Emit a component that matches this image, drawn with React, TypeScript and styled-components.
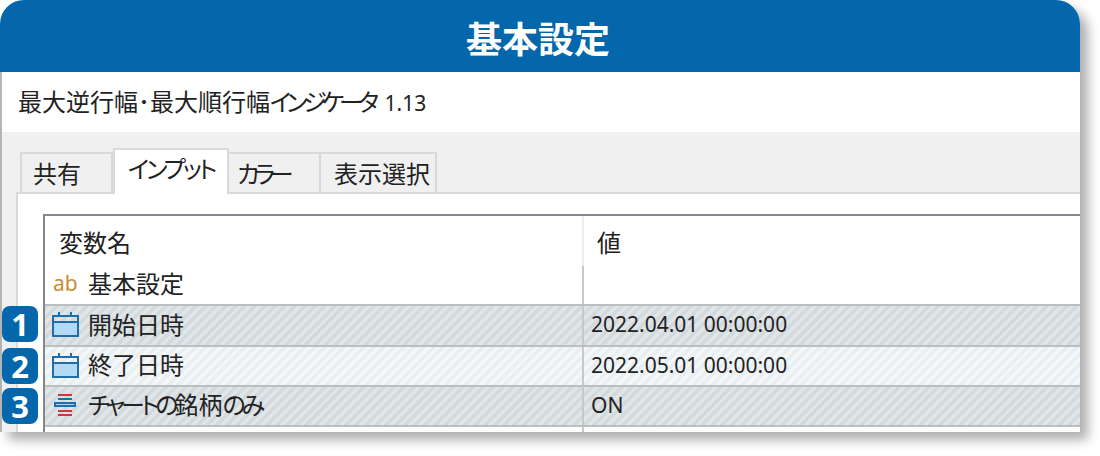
import { FC } from "react";
import styled, { createGlobalStyle } from "styled-components";

const GlobalStyle = createGlobalStyle`
    html, body {
        margin: 0;
        padding: 0;
        background: #fff;
    }
    body {
        width: 1100px;
        height: 456px;
        overflow: hidden;
        font-family: "Noto Sans CJK JP", "Noto Sans", sans-serif;
        font-feature-settings: "palt";
    }
`;

const tabs = [
    { label: "共有", width: 93, pad: 11, spacing: 0 },
    { label: "インプット", width: 116, pad: 13, spacing: -3, active: true },
    { label: "カラー", width: 92, pad: 8, spacing: -5 },
    { label: "表示選択", width: 116, pad: 13, spacing: 0 },
];

const CalendarIcon: FC = () => (
    <svg width="27" height="25" viewBox="0 0 27 25">
        <rect x="2" y="11" width="23" height="12" fill="#b3d9f5" />
        <rect x="1" y="4" width="25" height="20" fill="none" stroke="#1f6ea8" strokeWidth="2" />
        <rect x="0" y="9" width="27" height="2" fill="#1f6ea8" />
        <rect x="6" y="0" width="2" height="5" fill="#1f6ea8" />
        <rect x="18" y="0" width="2" height="5" fill="#1f6ea8" />
    </svg>
);

const SymbolIcon: FC = () => (
    <SymbolSvg width="22" height="22" viewBox="0 0 22 22">
        <rect x="4" y="0" width="14" height="2" fill="#c8393c" />
        <rect x="4" y="4" width="14" height="2" fill="#1f6ea8" />
        <rect x="1" y="9" width="20" height="3" fill="#a9d4f0" stroke="#1f6ea8" strokeWidth="2" />
        <rect x="4" y="16" width="14" height="2" fill="#c8393c" />
        <rect x="4" y="20" width="14" height="2" fill="#c8393c" />
    </SymbolSvg>
);

export default function App() {
    return (
        <>
            <GlobalStyle />
            <Card>
                <Header>基本設定</Header>
                <TitleRow>
                    最大逆行幅･最大順行幅<TitleKana>インジケータ</TitleKana> <Version>1.13</Version>
                </TitleRow>
                <Body>
                    <TabBar>
                        {tabs.map((tab) => (
                            <Tab
                                key={tab.label}
                                $width={tab.width}
                                $pad={tab.pad}
                                $spacing={tab.spacing}
                                $active={tab.active}
                            >
                                {tab.label}
                            </Tab>
                        ))}
                    </TabBar>
                    <Panel>
                        <Table>
                            <HeadRow>
                                <NameCell>
                                    <HeadLabel>変数名</HeadLabel>
                                </NameCell>
                                <ValueCell $fade>
                                    <HeadValue>値</HeadValue>
                                </ValueCell>
                            </HeadRow>
                            <GroupRow>
                                <NameCell>
                                    <Ab>ab</Ab>
                                    <Label>基本設定</Label>
                                </NameCell>
                                <ValueCell />
                            </GroupRow>
                            <Row $shade="dark" $height={41}>
                                <Badge $top={0}>1</Badge>
                                <NameCell>
                                    <IconSlot>
                                        <CalendarIcon />
                                    </IconSlot>
                                    <Label>開始日時</Label>
                                </NameCell>
                                <ValueCell>
                                    <Value>2022.04.01 00:00:00</Value>
                                </ValueCell>
                            </Row>
                            <Row $shade="light" $height={40}>
                                <Badge $top={1}>2</Badge>
                                <NameCell>
                                    <IconSlot>
                                        <CalendarIcon />
                                    </IconSlot>
                                    <Label>終了日時</Label>
                                </NameCell>
                                <ValueCell>
                                    <Value>2022.05.01 00:00:00</Value>
                                </ValueCell>
                            </Row>
                            <Row $shade="dark" $height={42} $closed>
                                <Badge $top={1}>3</Badge>
                                <NameCell>
                                    <IconSlot>
                                        <SymbolIcon />
                                    </IconSlot>
                                    <Label>
                                        <Kana>チャートの</Kana>銘柄<Kana>のみ</Kana>
                                    </Label>
                                </NameCell>
                                <ValueCell>
                                    <Value>ON</Value>
                                </ValueCell>
                            </Row>
                            <TailRow>
                                <NameCell />
                                <ValueCell />
                            </TailRow>
                        </Table>
                    </Panel>
                </Body>
            </Card>
        </>
    );
}

const Card = styled.div`
    width: 1080px;
    height: 432px;
    border-radius: 24px 24px 0 0;
    box-shadow: 8px 8px 12px rgba(0, 0, 0, 0.32);
    background: #fff;
    overflow: hidden;
    display: flex;
    flex-direction: column;
`;

const Header = styled.div`
    height: 72px;
    flex: none;
    box-sizing: border-box;
    padding-right: 4px;
    background: #0467ab;
    color: #fff;
    font-size: 36px;
    font-weight: 700;
    line-height: 74px;
    text-align: center;
`;

const TitleRow = styled.div`
    height: 60px;
    flex: none;
    box-sizing: border-box;
    border-left: 2px solid #b4b4b4;
    padding-left: 16px;
    font-size: 24px;
    line-height: 58px;
    color: #222;
    white-space: nowrap;
`;

const Kana = styled.span`
    letter-spacing: -4px;
`;

const TitleKana = styled(Kana)`
    letter-spacing: -4.8px;
`;

const Version = styled.span`
    font-family: "Noto Sans", sans-serif;
    font-size: 21px;
    margin-left: 5px;
`;

const Body = styled.div`
    flex: 1;
    min-height: 0;
    display: flex;
    flex-direction: column;
    box-sizing: border-box;
    border-left: 2px solid #b4b4b4;
    background: #f0f0f0;
    padding: 16px 0 0 14px;
`;

const TabBar = styled.div`
    display: flex;
    align-items: flex-end;
    height: 46px;
    flex: none;
    padding-left: 4px;
    position: relative;
    z-index: 1;
    margin-bottom: -2px;
`;

const Tab = styled.div<{ $width: number; $pad: number; $spacing: number; $active?: boolean }>`
    width: ${(p) => p.$width}px;
    height: ${(p) => (p.$active ? 46 : 42)}px;
    box-sizing: border-box;
    border: 2px solid #d9d9d9;
    border-left-width: ${(p) => (p.$active ? 2 : 0)}px;
    border-bottom: ${(p) => (p.$active ? "none" : "2px solid #d9d9d9")};
    background: ${(p) => (p.$active ? "#fff" : "#f0f0f0")};
    padding-left: ${(p) => p.$pad}px;
    font-size: 24px;
    line-height: ${(p) => (p.$active ? 36 : 38)}px;
    letter-spacing: ${(p) => p.$spacing}px;
    color: #222;
    white-space: nowrap;
    &:first-child {
        border-left-width: 2px;
    }
`;

const Panel = styled.div`
    flex: 1;
    min-height: 0;
    background: #fff;
    border-left: 2px solid #d9d9d9;
    border-top: 2px solid #d9d9d9;
    padding: 20px 0 0 25px;
`;

const Table = styled.div`
    height: 100%;
    box-sizing: border-box;
    border-left: 2px solid #85858c;
    border-top: 2px solid #85858c;
    display: flex;
    flex-direction: column;
`;

const BaseRow = styled.div`
    display: grid;
    grid-template-columns: 537px 1fr;
    flex: none;
`;

const HeadRow = styled(BaseRow)`
    height: 50px;
`;

const GroupRow = styled(BaseRow)`
    height: 38px;
`;

const TailRow = styled(BaseRow)`
    flex: 1;
`;

const Row = styled(BaseRow)<{ $shade: "dark" | "light"; $height: number; $closed?: boolean }>`
    position: relative;
    height: ${(p) => p.$height}px;
    box-sizing: border-box;
    border-top: 2px solid #babfc1;
    border-bottom: ${(p) => (p.$closed ? "2px solid #babfc1" : "none")};
    background: repeating-linear-gradient(
        135deg,
        ${(p) => (p.$shade === "dark" ? "#d3dadd" : "#e8eef1")} 0 3.5px,
        ${(p) => (p.$shade === "dark" ? "#e0e5e7" : "#f4f7f8")} 3.5px 7px
    );
`;

const NameCell = styled.div`
    display: flex;
    align-items: center;
    padding-left: 7px;
    min-width: 0;
`;

const ValueCell = styled.div<{ $fade?: boolean }>`
    display: flex;
    align-items: center;
    border-left: 2px solid ${(p) => (p.$fade ? "#ececec" : "#c8c8c8")};
`;

const HeadLabel = styled.span`
    font-size: 24px;
    color: #222;
    padding-left: 7px;
`;

const HeadValue = styled.span`
    font-size: 24px;
    color: #222;
    padding-left: 13px;
`;

const Ab = styled.span`
    width: 36px;
    flex: none;
    font-family: "Noto Sans", sans-serif;
    font-size: 21px;
    color: #c98c33;
    padding-left: 1px;
    box-sizing: border-box;
    margin-bottom: 4px;
`;

const IconSlot = styled.span`
    width: 36px;
    flex: none;
    display: flex;
    align-items: center;
    margin-bottom: 2px;
`;

const SymbolSvg = styled.svg`
    margin-left: 2px;
`;

const Label = styled.span`
    font-size: 24px;
    line-height: 32px;
    color: #222;
    white-space: nowrap;
    margin-bottom: 4px;
`;

const Value = styled.span`
    font-family: "Noto Sans", sans-serif;
    font-size: 21px;
    color: #222;
    padding-left: 7px;
    margin-bottom: 3px;
`;

const Badge = styled.span<{ $top: number }>`
    position: absolute;
    left: -43px;
    top: ${(p) => p.$top}px;
    width: 36px;
    height: 36px;
    border-radius: 8px;
    background: #0467ab;
    color: #fff;
    font-family: "Noto Sans", sans-serif;
    font-size: 31px;
    font-weight: 700;
    line-height: 36px;
    text-align: center;
`;
